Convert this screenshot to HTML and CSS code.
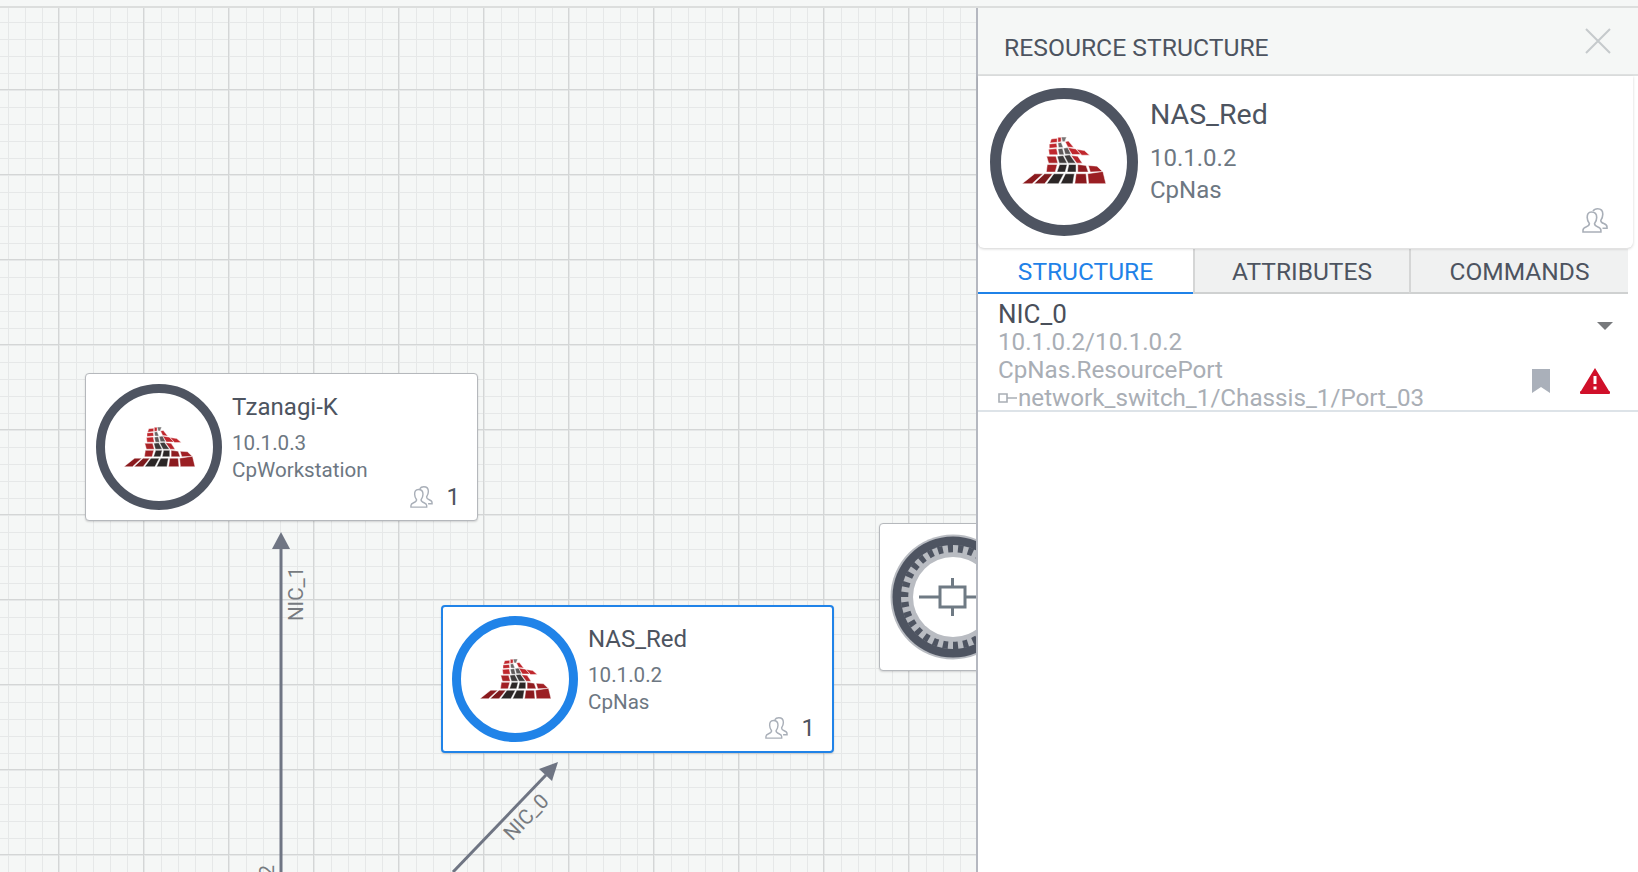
FILE: index.html
```html
<!DOCTYPE html>
<html lang="en">
<head>
    <meta charset="UTF-8">
    <title>Resource Structure</title>
    <link rel="stylesheet" href="styles.css">
</head>
<body>
    <svg class="defs" width="0" height="0">
        <symbol id="logo" viewBox="12 14 253 142">
            <g stroke="#fff" stroke-width="1.500">
                <g fill="#8b1a1e">
                    <polygon points="12,155 50,125 75,125 42,155"/>
                    <polygon points="48,155 80,125 104,125 80,155" fill="#7d1a1d"/>
                    <polygon points="171,155 175,125 205,125 208,155"/>
                    <polygon points="213,155 210,125 256,118 265,155" fill="#9b1f23"/>
                    <polygon points="85,120 88,97 118,97 112,120" fill="#a11f24"/>
                    <polygon points="180,120 180,97 205,100 212,120" fill="#8f1c20"/>
                    <polygon points="218,120 212,100 238,102 255,118" fill="#a11f24"/>
                </g>
                <g fill="#2b2626">
                    <polygon points="86,155 108,125 138,125 122,155"/>
                    <polygon points="128,155 143,125 170,125 165,155"/>
                    <polygon points="117,120 125,97 148,97 142,120"/>
                    <polygon points="148,120 153,97 175,97 175,120"/>
                    <polygon points="124,93 118,72 136,70 148,93" fill="#3e3a3a"/>
                    <polygon points="151,93 139,70 156,68 174,93" fill="#3e3a3a"/>
                    <polygon points="124,68 120,50 134,48 139,68" fill="#5e5959"/>
                    <polygon points="142,66 137,48 150,46 160,66" fill="#5e5959"/>
                    <polygon points="122,46 120,32 130,30 136,46" fill="#6b6666"/>
                    <polygon points="134,28 130,14 146,14 141,28" fill="#7a7676"/>
                </g>
                <g fill="#c0272d">
                    <polygon points="92,93 86,72 114,72 120,93" fill="#a92327"/>
                    <polygon points="177,93 160,70 180,72 194,93" fill="#b5252b"/>
                    <polygon points="94,68 92,51 116,49 120,68"/>
                    <polygon points="94,48 94,35 116,33 118,46"/>
                    <polygon points="96,32 100,20 118,18 118,30"/>
                    <polygon points="120,30 120,15 130,15 130,28"/>
                    <polygon points="163,67 150,46 174,50 190,67"/>
                    <polygon points="192,69 176,51 200,55 216,69"/>
                    <polygon points="150,44 142,28 152,26 168,46"/>
                </g>
            </g>
        </symbol>
        <symbol id="people" viewBox="0 0 26 25">
            <g fill="none" stroke="#a9afb8" stroke-width="1.6">
                <path d="M11 3.2c1-1.7 2.6-2.4 4.6-2.4 3.4 0 5.2 2.4 5.2 5.4 0 2.6-1 4.6-2 6.2 0 1.6 1 2.4 3 3.2 1.8.7 3.2 1.5 3.2 3.4v1.2h-4.5"/>
                <path d="M9.5 4c3.4 0 5.2 2.4 5.2 5.4 0 2.8-1.2 4.8-2.2 6.2 0 1.6 1.2 2.6 3.4 3.4 1.8.7 3 1.4 3 3.2V24H1v-1.8c0-1.8 1.2-2.5 3-3.2 2.2-.8 3.4-1.8 3.4-3.4-1-1.4-2.2-3.4-2.2-6.2C5.200 6.400 6.100 4 9.500 4z"/>
            </g>
        </symbol>
    </svg>

    <div class="topbar"></div>
    <div class="main">
        <div class="canvas">
            <svg class="edges" width="977" height="864">
                <line x1="281" y1="540" x2="281" y2="864" class="edge"/>
                <polygon points="272,541 290,541 281,524" class="head"/>
                <text class="edge-label" transform="translate(303 613) rotate(-90)">NIC_1</text>
                <text class="edge-label" text-anchor="end" transform="translate(274 857) rotate(-90)">NIC_2</text>
                <line x1="546" y1="767" x2="453" y2="864" class="edge"/>
                <polygon points="558,754 552,773 539,761" class="head"/>
                <text class="edge-label" text-anchor="middle" transform="translate(526 809) rotate(-46) translate(0 7)">NIC_0</text>
            </svg>

            <div class="node node-tzanagi">
                <div class="ring"><svg class="logo"><use href="#logo"/></svg></div>
                <div class="node-text">
                    <div class="node-name">Tzanagi-K</div>
                    <div class="node-sub node-ip">10.1.0.3</div>
                    <div class="node-sub">CpWorkstation</div>
                </div>
                <div class="node-count"><svg class="people"><use href="#people"/></svg><span>1</span></div>
            </div>

            <div class="node node-nas selected">
                <div class="ring"><svg class="logo"><use href="#logo"/></svg></div>
                <div class="node-text">
                    <div class="node-name">NAS_Red</div>
                    <div class="node-sub node-ip">10.1.0.2</div>
                    <div class="node-sub">CpNas</div>
                </div>
                <div class="node-count"><svg class="people"><use href="#people"/></svg><span>1</span></div>
            </div>

            <div class="node node-switch">
                <svg class="gear" width="126" height="126" viewBox="0 0 126 126">
                    <circle cx="63" cy="63" r="62.500" fill="#b9bcc2"/>
                    <circle cx="63" cy="63" r="60.500" fill="#4e5461"/>
                    <circle cx="63" cy="63" r="52" fill="#b9bcc2"/>
                    <circle cx="63" cy="63" r="48.500" fill="none" stroke="#4e5461" stroke-width="7.500" pathLength="60" stroke-dasharray="1 1"/>
                    <circle cx="63" cy="63" r="40" fill="#fff"/>
                    <g fill="none" stroke="#6f7a84" stroke-width="3">
                        <rect x="50" y="53" width="25" height="20"/>
                        <path d="M29 63h21M75 63h30M62.500 44v9M62.500 73v9"/>
                    </g>
                </svg>
            </div>
        </div>

        <aside class="panel">
            <div class="panel-head">
                <span class="panel-title">RESOURCE STRUCTURE</span>
                <svg class="close" width="26" height="26" viewBox="0 0 26 26">
                    <path d="M1 1l24 24M25 1L1 25" fill="none" stroke="#c5cacc" stroke-width="2"/>
                </svg>
            </div>
            <div class="summary">
                <div class="ring ring-big"><svg class="logo"><use href="#logo"/></svg></div>
                <div class="summary-text">
                    <div class="summary-name">NAS_Red</div>
                    <div class="summary-sub summary-ip">10.1.0.2</div>
                    <div class="summary-sub">CpNas</div>
                </div>
                <svg class="people people-big"><use href="#people"/></svg>
            </div>
            <div class="tabs">
                <div class="tab active">STRUCTURE</div>
                <div class="tab">ATTRIBUTES</div>
                <div class="tab">COMMANDS</div>
            </div>
            <div class="row">
                <div class="row-text">
                    <div class="row-name">NIC_0</div>
                    <div>10.1.0.2/10.1.0.2</div>
                    <div>CpNas.ResourcePort</div>
                    <div class="row-port">
                        <svg class="port" width="20" height="10" viewBox="0 0 20 10">
                            <path d="M1 1h8v8H1zM9 5h10" fill="none" stroke="#a9aeb5" stroke-width="1.600"/>
                        </svg>network_switch_1/Chassis_1/Port_03
                    </div>
                </div>
                <div class="row-icons">
                    <div class="caret"></div>
                    <div class="row-flags">
                        <svg width="18" height="24" viewBox="0 0 18 24">
                            <path d="M0 0h18v24l-9-6-9 6z" fill="#aab0ba"/>
                        </svg>
                        <svg width="30" height="27" viewBox="0 0 30 27">
                            <path d="M15 1L29 24a1.500 1.500 0 0 1-1 3H2a1.500 1.500 0 0 1-1-3z" fill="#d0102a"/>
                            <path d="M13.500 9h3v8h-3zM13.500 19.500h3v3h-3z" fill="#fff"/>
                        </svg>
                    </div>
                </div>
            </div>
        </aside>
    </div>
</body>
</html>
```

FILE: styles.css
```css
* {
    box-sizing: border-box;
}
html, body {
    height: 100%;
}
body {
    margin: 0;
    overflow: hidden;
    font-family: 'Roboto', 'Liberation Sans', sans-serif;
    color: #4d5460;
    background: #f5f7f6;
}
.defs {
    position: absolute;
}
.topbar {
    height: 8px;
    border-bottom: 2px solid #dcdedd;
}
.main {
    display: flex;
    height: 864px;
}

/* canvas with the grid */
.canvas {
    position: relative;
    flex: 1;
    overflow: hidden;
    background-color: #f5f7f6;
    background-image:
        linear-gradient(to right, #d4d6d6 1.5px, transparent 1.5px),
        linear-gradient(to bottom, #d4d6d6 1.5px, transparent 1.5px),
        linear-gradient(to right, #e6e8e8 1.5px, transparent 1.5px),
        linear-gradient(to bottom, #e6e8e8 1.5px, transparent 1.5px);
    background-size: 85px 85px, 85px 85px, 17px 17px, 17px 17px;
    background-position: 58px 0, 0 81px, 8px 0, 0 14px;
}
.edges {
    position: absolute;
    left: 0;
    top: 0;
}
.edge {
    stroke: #6f7583;
    stroke-width: 3;
}
.head {
    fill: #6f7583;
}
.edge-label {
    font-size: 20.500px;
    fill: #777b80;
}

/* nodes */
.node {
    position: absolute;
    width: 393px;
    height: 148px;
    display: flex;
    padding: 10px;
    background: #fff;
    border: 1px solid #b5b8bc;
    border-radius: 4px;
    box-shadow: 0 1px 2px rgba(0, 0, 0, 0.15);
}
.node-tzanagi {
    left: 85px;
    top: 365px;
}
.node-nas {
    left: 441px;
    top: 597px;
}
.node-switch {
    left: 879px;
    top: 515px;
}
.node.selected {
    border: 2px solid #2083e8;
    padding: 9px;
}
.selected .ring {
    border-color: #2083e8;
}
.ring {
    width: 126px;
    height: 126px;
    flex-shrink: 0;
    display: flex;
    align-items: center;
    justify-content: center;
    border: 9px solid #4e5461;
    border-radius: 50%;
}
.logo {
    width: 71px;
    height: 40px;
    margin-top: -1px;
}
.node-text {
    margin-left: 10px;
    padding-top: 8px;
}
.node-name {
    font-size: 24px;
    line-height: 30px;
    margin-bottom: 8px;
}
.node-sub {
    font-size: 20.600px;
    line-height: 27px;
    color: #6d7782;
}
.node-count {
    position: absolute;
    right: 17px;
    bottom: 11px;
    display: flex;
    align-items: center;
    gap: 14px;
    font-size: 24px;
    line-height: 24px;
}
.people {
    width: 23px;
    height: 22px;
}

/* right panel */
.panel {
    width: 662px;
    flex-shrink: 0;
    position: relative;
    z-index: 2;
    background: #fff;
    border-left: 2px solid #b5b8c0;
}
.panel-head {
    height: 68px;
    display: flex;
    align-items: center;
    justify-content: space-between;
    padding: 16px 27px 0 26px;
    background: #f5f7f6;
    border-bottom: 2px solid #dfe1e1;
}
.panel-head .close {
    margin-top: -17px;
}
.panel-title {
    font-size: 24.700px;
    margin-top: -4px;
}
.summary {
    height: 172px;
    display: flex;
    padding: 12px 25px 12px 12px;
    margin-right: 5px;
    background: #fff;
    border-radius: 0 0 6px 6px;
    box-shadow: 0 1px 3px rgba(0, 0, 0, 0.18);
    position: relative;
}
.ring-big {
    width: 148px;
    height: 148px;
    border-width: 11px;
}
.ring-big .logo {
    width: 84px;
    height: 47px;
    margin-top: -3px;
}
.summary-text {
    margin-left: 12px;
    padding-top: 8px;
}
.summary-name {
    font-size: 28.500px;
    line-height: 38px;
    margin-bottom: 8px;
}
.summary-sub {
    font-size: 24px;
    line-height: 32px;
    color: #6d7782;
}
.people-big {
    width: 26px;
    height: 25px;
    margin-left: auto;
    align-self: flex-end;
    margin-bottom: 3px;
}
.tabs {
    display: flex;
    height: 45px;
    margin-top: 1px;
}
.tab {
    flex: 0 0 216px;
    display: flex;
    align-items: center;
    justify-content: center;
    padding-top: 2px;
    font-size: 24.500px;
    background: #f0f1f1;
    border-left: 2px solid #d5d6d6;
    border-bottom: 2px solid #cfd1d1;
}
.tab:last-child {
    flex-basis: 219px;
}
.tab.active {
    flex-basis: 215px;
    background: #fff;
    color: #1f82e8;
    border-left: none;
    border-bottom: 2px solid #1f82e8;
}
.row {
    display: flex;
    justify-content: space-between;
    height: 118px;
    padding: 6px 28px 0 20px;
    border-bottom: 2px solid #dde3e8;
}
.row-text {
    font-size: 24.200px;
    line-height: 28px;
    color: #a9aeb5;
}
.row-name {
    font-size: 26px;
    color: #4a4f5a;
}
.row-port {
    display: flex;
    align-items: center;
}
.row-icons {
    display: flex;
    flex-direction: column;
    align-items: flex-end;
}
.caret {
    width: 0;
    height: 0;
    margin: 22px -3px 0 0;
    border-left: 8px solid transparent;
    border-right: 8px solid transparent;
    border-top: 8px solid #77797c;
}
.row-flags {
    display: flex;
    align-items: center;
    gap: 30px;
    margin-top: 37px;
}
```
